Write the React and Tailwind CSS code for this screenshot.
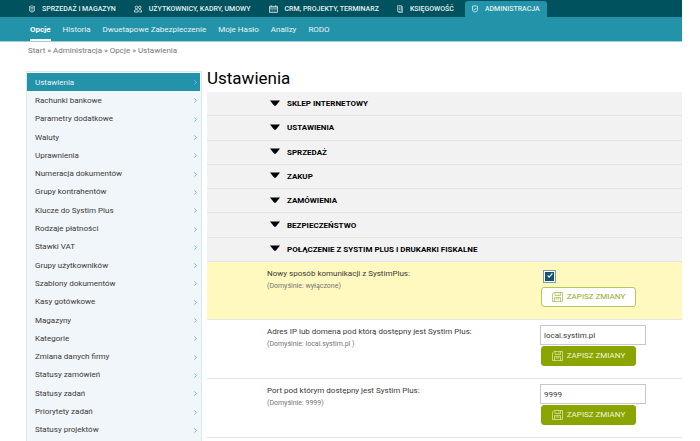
const sections = [
  'SKLEP INTERNETOWY',
  'USTAWIENIA',
  'SPRZEDAŻ',
  'ZAKUP',
  'ZAMÓWIENIA',
  'BEZPIECZEŃSTWO',
  'POŁĄCZENIE Z SYSTIM PLUS I DRUKARKI FISKALNE',
];

const menu = [
  'Ustawienia',
  'Rachunki bankowe',
  'Parametry dodatkowe',
  'Waluty',
  'Uprawnienia',
  'Numeracja dokumentów',
  'Grupy kontrahentów',
  'Klucze do Systim Plus',
  'Rodzaje płatności',
  'Stawki VAT',
  'Grupy użytkowników',
  'Szablony dokumentów',
  'Kasy gotówkowe',
  'Magazyny',
  'Kategorie',
  'Zmiana danych firmy',
  'Statusy zamówień',
  'Statusy zadań',
  'Priorytety zadań',
  'Statusy projektów',
];

const subnav = ['Opcje', 'Historia', 'Dwuetapowe Zabezpieczenie', 'Moje Hasło', 'Analizy', 'RODO'];

function BoxIcon() {
  return (
    <svg className="h-2 w-1.5" viewBox="0 0 6 8" fill="none" stroke="currentColor" strokeWidth="0.6" aria-hidden="true">
      <path d="M.5 1.5 2.5.8 5.5 1.6V6L3 7.3.5 6zM.5 1.8 3 2.8 5.5 1.8M3 2.8V7M1.2 3.6l1 .4M1.2 5l1 .4M3.8 4l1-.4M3.8 5.5l1-.4" />
    </svg>
  );
}

function UsersIcon() {
  return (
    <svg className="h-2 w-2" viewBox="0 0 8 8" fill="none" stroke="currentColor" strokeWidth="0.8" aria-hidden="true">
      <circle cx="2.4" cy="2.4" r="1.3" />
      <circle cx="5.8" cy="2.4" r="1.3" />
      <path d="M.4 7V5.9Q.4 4.6 2.4 4.6T4.3 5.9V7zM5 4.6Q7.6 4.4 7.6 5.9V7H5.4" />
    </svg>
  );
}

function CalendarIcon() {
  return (
    <svg className="h-2 w-[9px]" viewBox="0 0 9 8" fill="none" stroke="currentColor" strokeWidth="0.8" aria-hidden="true">
      <path d="M.5 1.4h8v6h-8zM.5 3h8M2.3.3v1.6M6.7.3v1.6" />
      <path d="M1.6 4.4h5.8M1.6 6h5.8" strokeDasharray="1 .6" strokeWidth="0.6" />
    </svg>
  );
}

function LedgerIcon() {
  return (
    <svg className="h-2 w-1.5" viewBox="0 0 6 8" fill="none" stroke="currentColor" strokeWidth="0.6" aria-hidden="true">
      <path d="M.5.6h4v5.8h-4zM4.5 1.6h1v5.9H1.6V6.4M1.4 2h2.2M1.4 3.3h2.2M1.4 4.6h2.2" />
    </svg>
  );
}

function ShieldIcon() {
  return (
    <svg className="h-2 w-1.5" viewBox="0 0 6 8" fill="none" stroke="currentColor" strokeWidth="0.8" aria-hidden="true">
      <path d="M.5 1.2 3 .8l2.5.4v3.6Q5.3 6.4 3 7.2.7 6.4.5 4.8zM1.7 3.9l1 1 1.7-2" />
    </svg>
  );
}

const modules = [
  { label: 'SPRZEDAŻ I MAGAZYN', Icon: BoxIcon },
  { label: 'UŻYTKOWNICY, KADRY, UMOWY', Icon: UsersIcon },
  { label: 'CRM, PROJEKTY, TERMINARZ', Icon: CalendarIcon },
  { label: 'KSIĘGOWOŚĆ', Icon: LedgerIcon },
  { label: 'ADMINISTRACJA', Icon: ShieldIcon, active: true },
];

function SaveButton({ outline }) {
  const look = outline
    ? 'border-[#b4c75c] bg-white text-[#8fab1c]'
    : 'border-[#8aa500] bg-[#8aa500] text-[#f1f5dc]';
  return (
    <button type="button" className={`ml-px flex h-5 w-[95px] items-center justify-center gap-1 rounded-[3px] border text-[8px] leading-3 ${look}`}>
      <svg className="h-2.5 w-[11px]" viewBox="0 0 11 10" fill="none" stroke="currentColor" strokeWidth="0.6" aria-hidden="true">
        <path d="M2 .5h8.5v9H.5V2zM3 .5v3h5.5v-3M6.8 1v1.6M2.5 9.5v-4h6v4M3.5 7h4" />
      </svg>
      ZAPISZ ZMIANY
    </button>
  );
}

function Setting({ id, label, hint, highlight, children }) {
  return (
    <div className={`flex border-b border-[#e6e6e6] pt-[5px] pb-3 pl-[60px] ${highlight ? 'bg-[#fff8bf]' : ''}`}>
      <div className="min-w-0 flex-1">
        <label htmlFor={id} className="block text-[8px] leading-[13px] text-[#3a3a3a]">{label}</label>
        <p className="text-[7px] leading-3 text-[#777]">{hint}</p>
      </div>
      <div className="flex w-[142px] shrink-0 flex-col items-start gap-[1px]">
        {children}
      </div>
    </div>
  );
}

function TextSetting({ id, label, hint, value }) {
  return (
    <Setting id={id} label={label} hint={hint}>
      <input id={id} type="text" defaultValue={value} className="h-5 w-[106px] border border-[#c8c8c8] bg-white px-[3px] text-[8px] text-[#3a3a3a]" />
      <SaveButton />
    </Setting>
  );
}

export default function App() {
  return (
    <div className="flex min-h-screen flex-col bg-white pr-[18px] font-[Roboto,sans-serif] text-[#3a3a3a]">
      <header>
        <nav className="flex h-[17px] items-stretch gap-1 bg-[#00525e] pt-[1px] pl-[22px]">
          {modules.map(({ label, Icon, active }) => (
            <a
              key={label}
              href="#"
              className={`flex items-center gap-[7px] rounded-t-[3px] px-[7px] text-[7px] leading-3 font-medium whitespace-nowrap text-[#e3eff1] ${active ? 'bg-[#2393a9]' : ''}`}
            >
              <Icon />
              {label}
            </a>
          ))}
        </nav>
        <nav className="flex h-[25px] gap-3 border-b border-[#9fd0da] bg-[#2393a9] pl-[30px]">
          {subnav.map((label, i) => (
            <a
              key={label}
              href="#"
              className={`flex items-center border-b-2 pt-1 text-[8px] leading-3 whitespace-nowrap ${i === 0 ? 'border-white font-bold text-white' : 'border-transparent text-[#e8f4f6]'}`}
            >
              {label}
            </a>
          ))}
        </nav>
      </header>

      <p className="pt-[3px] pl-7 text-[8px] leading-3 text-[#777]">Start » Administracja » Opcje » Ustawienia</p>

      <div className="flex flex-1 gap-[5px] pt-3.5 pl-[26px]">
        <aside className="w-44 shrink-0 border-x border-t border-[#dde8ec] bg-[#f0f6f9] pt-[1px] pr-[1px]">
          <ul className="grid min-h-[366px] auto-rows-fr">
            {menu.map((label, i) => (
              <li key={label} className="flex">
                <a
                  href="#"
                  className={`flex flex-1 items-center justify-between pt-px pr-[3px] pl-2 text-[8px] leading-3 ${i === 0 ? 'bg-[#2393a9] text-[#e8f4f6]' : 'text-[#3a3a3a]'}`}
                >
                  {label}
                  <svg className="h-[5px] w-[3px] text-[#6cc0d0]" viewBox="0 0 3 5" fill="none" stroke="currentColor" aria-hidden="true">
                    <path d="M.4.4 2.4 2.5.4 4.6" />
                  </svg>
                </a>
              </li>
            ))}
          </ul>
        </aside>

        <main className="min-w-0 flex-1 -mt-1">
          <h1 className="pb-[3px] text-[17px] leading-[22px] text-black">Ustawienia</h1>
          <div className="grid min-h-[170px] auto-rows-fr">
            {sections.map((label) => (
              <button
                key={label}
                type="button"
                className="flex items-center gap-[7px] border-b border-[#e4e4e4] bg-[#f2f2f2] pt-px pl-[63px] text-left text-[8px] leading-3 font-bold text-black"
              >
                <svg className="mb-[3px] h-[6px] w-2.5" viewBox="0 0 10 6" fill="currentColor" aria-hidden="true">
                  <path d="M0 .5h10L6 5.4Q5 6.2 4 5.4z" />
                </svg>
                {label}
              </button>
            ))}
          </div>

          <Setting id="mode" label="Nowy sposób komunikacji z SystimPlus:" hint="(Domyślnie: wyłączone)" highlight>
            <span className="relative mt-[3px] mb-[3px] ml-[3px] flex h-[13px] w-[13px]">
              <input id="mode" type="checkbox" defaultChecked className="h-full w-full appearance-none border border-[#7c9cab] bg-[#14526f] shadow-[inset_0_0_0_1px_#ffffff]" />
              <svg className="pointer-events-none absolute inset-0 h-full w-full" viewBox="0 0 13 13" fill="none" stroke="#fff" strokeWidth="1.1" aria-hidden="true">
                <path d="M4.6 5.4 6.2 7.2 9.4 3.4" />
              </svg>
            </span>
            <SaveButton outline />
          </Setting>
          <TextSetting id="host" label="Adres IP lub domena pod którą dostępny jest Systim Plus:" hint="(Domyślnie: local.systim.pl )" value="local.systim.pl" />
          <TextSetting id="port" label="Port pod którym dostępny jest Systim Plus:" hint="(Domyślnie: 9999)" value="9999" />
        </main>
      </div>
    </div>
  );
}
